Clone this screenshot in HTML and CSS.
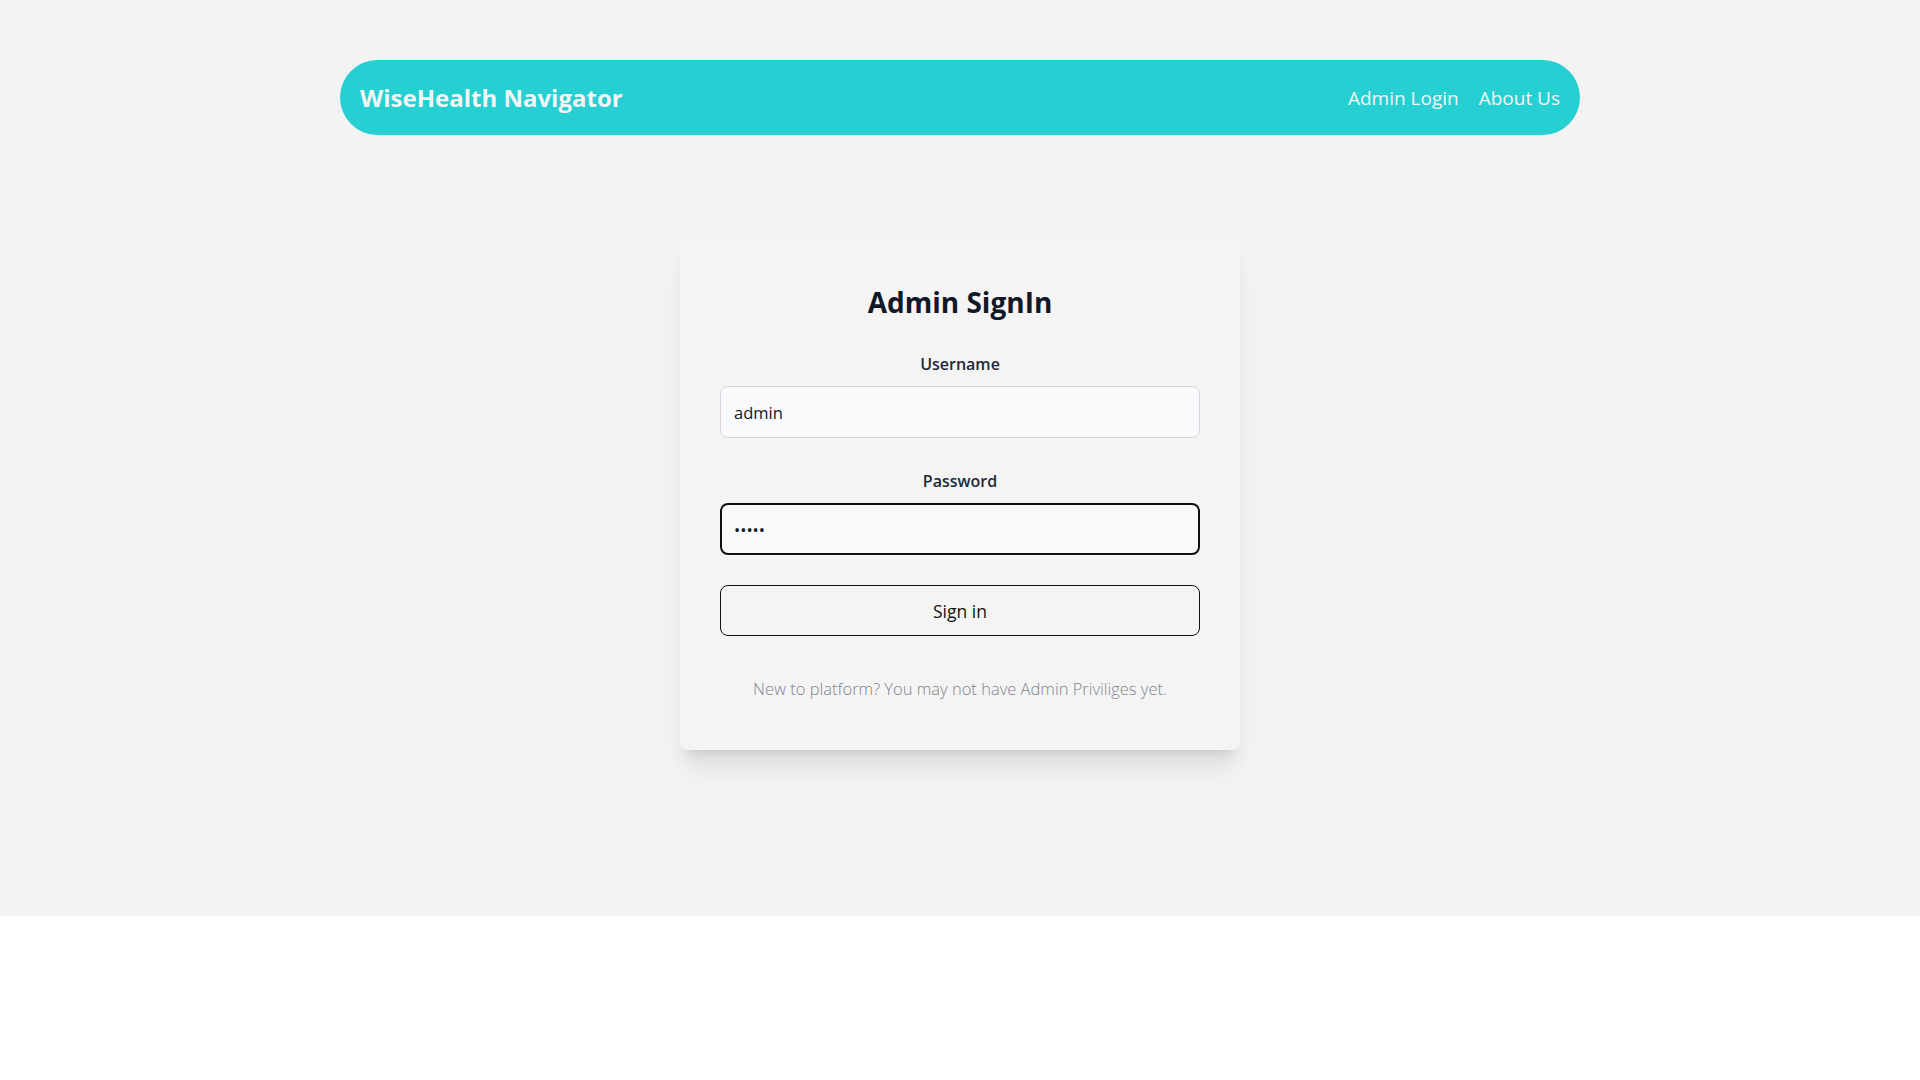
FILE: index.html
```html
<!DOCTYPE html>
<html lang="en">
<head>
<meta charset="utf-8">
<title>WiseHealth Navigator - Admin SignIn</title>
<link rel="stylesheet" href="styles.css">
</head>
<body>
<div class="page">
  <nav class="navbar">
    <a class="brand" href="#">WiseHealth Navigator</a>
    <div class="nav-links">
      <a href="#">Admin Login</a>
      <a href="#">About Us</a>
    </div>
  </nav>
  <main class="main">
    <form class="card">
      <h1 class="card-title">Admin SignIn</h1>
      <div class="field">
        <label class="label" for="username">Username</label>
        <input class="input" id="username" type="text" value="admin">
      </div>
      <div class="field">
        <label class="label" for="password">Password</label>
        <input class="input input-active" id="password" type="password" value="admin">
      </div>
      <button class="btn" type="button">Sign in</button>
      <p class="note">New to platform? You may not have Admin Priviliges yet.</p>
    </form>
  </main>
</div>
</body>
</html>
```
FILE: styles.css
```css
* { box-sizing: border-box; }
html, body { margin: 0; padding: 0; }
body {
  background: #ffffff;
  font-family: "Open Sans", "Noto Sans", sans-serif;
  color: #111827;
}
.page {
  background: #f3f3f3;
  padding: 60px 0 166px;
}
.navbar {
  width: 1240px;
  height: 75px;
  margin: 0 auto;
  background: #26cfd2;
  border-radius: 38px;
  display: flex;
  align-items: center;
  justify-content: space-between;
  padding: 0 20px;
}
.brand {
  color: #f5f5f5;
  font-weight: 700;
  font-size: 24px;
  text-decoration: none;
}
.nav-links {
  display: flex;
  gap: 20px;
}
.nav-links a {
  color: #f5f5f5;
  font-size: 19px;
  text-decoration: none;
}
.main {
  display: flex;
  justify-content: center;
  padding-top: 105px;
}
.card {
  width: 560px;
  background: #f4f4f4;
  border-radius: 8px;
  padding: 40px 40px 47px;
  box-shadow: 0 20px 25px -5px rgba(0,0,0,0.1), 0 8px 10px -6px rgba(0,0,0,0.1);
  text-align: center;
}
.card-title {
  margin: 3px 0 29px;
  font-size: 28px;
  line-height: 38px;
  font-weight: 700;
  color: #111827;
}
.field {
  display: flex;
  flex-direction: column;
  align-items: stretch;
  margin-bottom: 29px;
}
.label {
  font-size: 16px;
  line-height: 28px;
  font-weight: 600;
  color: #1f2937;
  margin-bottom: 8px;
}
.input {
  height: 52px;
  width: 100%;
  background: #f9fafb;
  border: 1px solid #d1d5db;
  border-radius: 8px;
  padding: 0 13px;
  font-family: inherit;
  font-size: 16.5px;
  color: #111827;
  outline: none;
}
.input-active {
  border: 2px solid #111111;
  padding: 0 12px;
}
.btn {
  display: block;
  width: 100%;
  height: 51px;
  margin-top: 30px;
  background: transparent;
  border: 1px solid #111111;
  border-radius: 8px;
  font-family: inherit;
  font-size: 17.5px;
  color: #111111;
  cursor: pointer;
}
.note {
  margin: 39px 0 0;
  font-size: 16.5px;
  line-height: 28px;
  font-weight: 300;
  color: #80848c;
}
```
